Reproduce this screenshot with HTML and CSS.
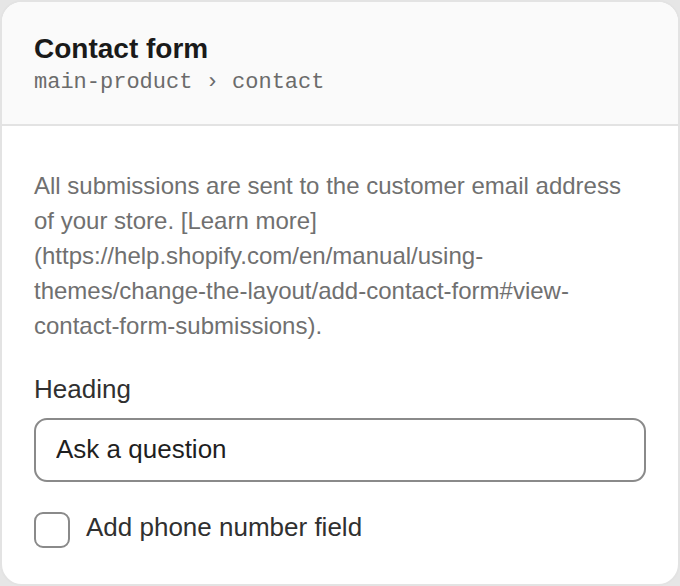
FILE: index.html
```html
<!DOCTYPE html>
<html lang="en">
<head>
<meta charset="utf-8">
<title>Contact form</title>
<link rel="stylesheet" href="styles.css">
</head>
<body>
  <section class="card">
    <header class="card-header">
      <h1 class="card-title">Contact form</h1>
      <div class="card-path">main-product › contact</div>
    </header>
    <div class="card-body">
      <p class="help-text">All submissions are sent to the customer email address of your store. [Learn more](https://help.shopify.com/en/manual/using-themes/change-the-layout/add-contact-form#view-contact-form-submissions).</p>
      <label class="field-label" for="heading">Heading</label>
      <input class="text-input" id="heading" type="text" value="Ask a question">
      <label class="check-row">
        <span class="check-box"></span>
        <span class="check-label">Add phone number field</span>
      </label>
    </div>
  </section>
</body>
</html>
```
FILE: styles.css
```css
* {
  box-sizing: border-box;
}

html,
body {
  margin: 0;
  padding: 0;
  background: #e6e6e6;
}

body {
  font-family: "Liberation Sans", Arial, sans-serif;
}

.card {
  width: 680px;
  height: 586px;
  border: 2px solid #e3e3e3;
  border-radius: 22px;
  background: #ffffff;
  overflow: hidden;
  display: flex;
  flex-direction: column;
}

.card-header {
  background: #fafafa;
  border-bottom: 2px solid #e3e3e3;
  padding: 30px 32px 0;
  height: 124px;
}

.card-title {
  margin: 0;
  font-size: 28px;
  line-height: 34px;
  font-weight: 700;
  color: #1a1a1a;
}

.card-path {
  margin-top: 2px;
  font-family: "Liberation Mono", "Courier New", monospace;
  font-size: 22px;
  line-height: 30px;
  color: #6b6b6b;
}

.card-body {
  padding: 42px 32px 0;
  display: flex;
  flex-direction: column;
}

.help-text {
  margin: 0;
  font-size: 24px;
  line-height: 35px;
  color: #707070;
}

.field-label {
  margin-top: 30px;
  font-size: 26px;
  line-height: 32px;
  color: #303030;
}

.text-input {
  margin-top: 13px;
  width: 612px;
  height: 64px;
  border: 2px solid #8a8a8a;
  border-radius: 13px;
  padding: 0 20px 2px;
  font-family: "Liberation Sans", Arial, sans-serif;
  font-size: 26px;
  color: #1f1f1f;
  background: #ffffff;
  outline: none;
}

.check-row {
  margin-top: 30px;
  display: flex;
  align-items: center;
  gap: 16px;
}

.check-box {
  width: 36px;
  height: 36px;
  border: 2px solid #8a8a8a;
  border-radius: 9px;
  background: #ffffff;
  flex: none;
}

.check-label {
  font-size: 26px;
  line-height: 32px;
  color: #303030;
  margin-top: -6px;
}
```
